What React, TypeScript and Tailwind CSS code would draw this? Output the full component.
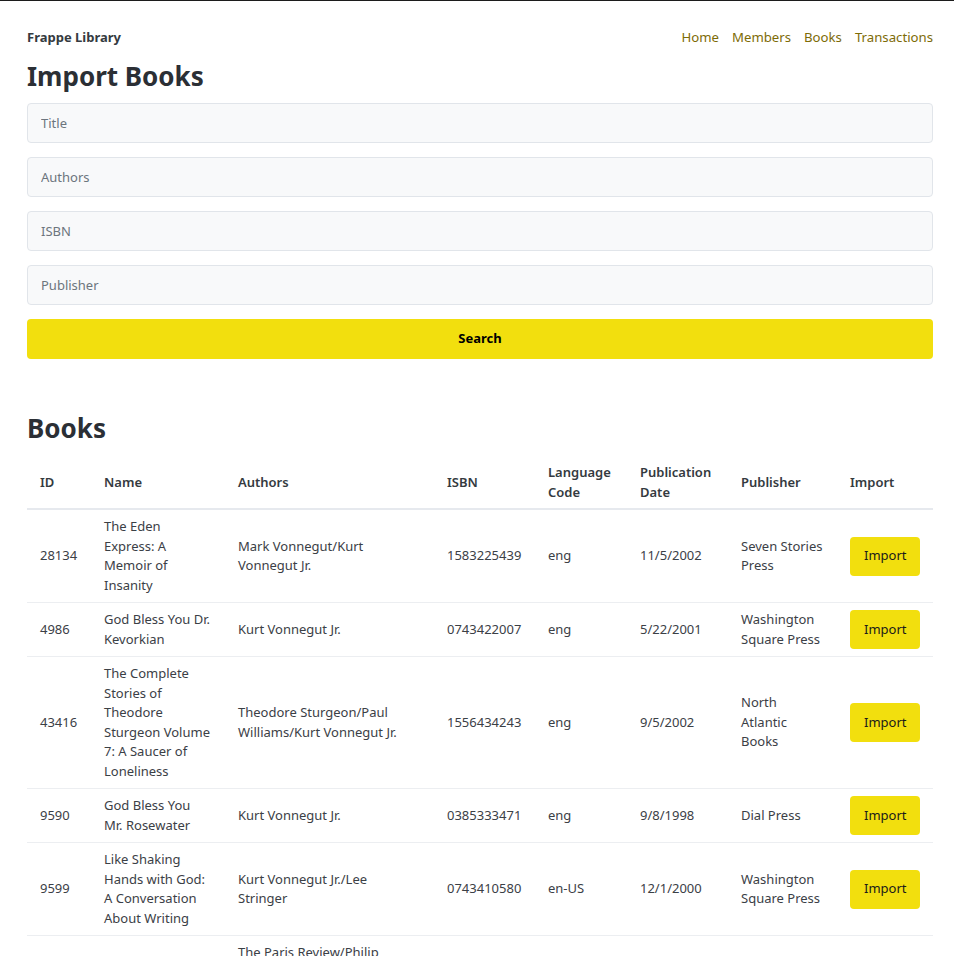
import React from "react";

const books = [
  {
    id: "28134",
    name: "The Eden Express: A Memoir of Insanity",
    authors: "Mark Vonnegut/Kurt Vonnegut Jr.",
    isbn: "1583225439",
    lang: "eng",
    date: "11/5/2002",
    publisher: "Seven Stories Press",
  },
  {
    id: "4986",
    name: "God Bless You Dr. Kevorkian",
    authors: "Kurt Vonnegut Jr.",
    isbn: "0743422007",
    lang: "eng",
    date: "5/22/2001",
    publisher: "Washington Square Press",
  },
  {
    id: "43416",
    name: "The Complete Stories of Theodore Sturgeon Volume 7: A Saucer of Loneliness",
    authors: "Theodore Sturgeon/Paul Williams/Kurt Vonnegut Jr.",
    isbn: "1556434243",
    lang: "eng",
    date: "9/5/2002",
    publisher: "North Atlantic Books",
  },
  {
    id: "9590",
    name: "God Bless You Mr. Rosewater",
    authors: "Kurt Vonnegut Jr.",
    isbn: "0385333471",
    lang: "eng",
    date: "9/8/1998",
    publisher: "Dial Press",
  },
  {
    id: "9599",
    name: "Like Shaking Hands with God: A Conversation About Writing",
    authors: "Kurt Vonnegut Jr./Lee Stringer",
    isbn: "0743410580",
    lang: "en-US",
    date: "12/1/2000",
    publisher: "Washington Square Press",
  },
  {
    id: "9598",
    name: "The Paris Review Interviews, Vol. 1",
    authors:
      "The Paris Review/Philip Gourevitch/Kurt Vonnegut Jr./Dorothy Parker/Ernest Hemingway/T.S. Eliot/Truman Capote",
    isbn: "0312361750",
    lang: "eng",
    date: "11/14/2006",
    publisher: "Picador USA",
  },
];

const fields = ["Title", "Authors", "ISBN", "Publisher"];

export default function App() {
  return (
    <div
      className="min-h-screen bg-white border-t border-[#1c1c1c] pl-[27px] pr-[21px] text-[#3b4046]"
      style={{ fontFamily: '"Noto Sans", "Open Sans", sans-serif' }}
    >
      {/* Header */}
      <header className="flex items-center justify-between pt-[27px]">
        <span className="text-[13px] font-bold text-[#343a40] leading-[19px]">
          Frappe Library
        </span>
        <nav className="flex gap-[13px] text-[13.2px] leading-[19px] text-[#7d6b06]">
          <a href="#">Home</a>
          <a href="#">Members</a>
          <a href="#">Books</a>
          <a href="#">Transactions</a>
        </nav>
      </header>

      {/* Import form */}
      <h1 className="mt-[12px] text-[26px] font-bold leading-[34px] text-[#2b2f35]">
        Import Books
      </h1>
      <form className="mt-[10px] flex flex-col gap-[14px]">
        {fields.map((f) => (
          <input
            key={f}
            placeholder={f}
            className="h-[40px] w-full rounded-[4px] border border-[#e1e5ea] bg-[#f8f9fa] px-[13px] text-[13px] text-[#3b4046] placeholder:text-[#6c757d] outline-none"
          />
        ))}
        <button
          type="button"
          className="h-[40px] w-full rounded-[4px] bg-[#f2df0e] text-[13px] font-bold text-black"
        >
          Search
        </button>
      </form>

      {/* Books table */}
      <h2 className="mt-[52px] text-[26px] font-bold leading-[34px] text-[#2b2f35]">
        Books
      </h2>
      <table className="mt-[9px] w-full table-fixed border-collapse text-[13px] leading-[19.5px]">
        <colgroup>
          <col className="w-[64px]" />
          <col className="w-[134px]" />
          <col className="w-[209px]" />
          <col className="w-[101px]" />
          <col className="w-[92px]" />
          <col className="w-[101px]" />
          <col className="w-[109px]" />
          <col className="w-[96px]" />
        </colgroup>
        <thead>
          <tr className="border-b-2 border-[#e6e9ee] text-left text-[#343a40]">
            {[
              "ID",
              "Name",
              "Authors",
              "ISBN",
              "Language Code",
              "Publication Date",
              "Publisher",
              "Import",
            ].map((h) => (
              <th key={h} className="px-[13px] pt-[9px] pb-[6px] align-middle font-semibold">
                {h}
              </th>
            ))}
          </tr>
        </thead>
        <tbody>
          {books.map((b) => (
            <tr key={b.id} className="border-b border-[#eceef1]">
              <td className="px-[13px] py-[7px] align-middle">{b.id}</td>
              <td className="px-[13px] py-[7px] align-middle">{b.name}</td>
              <td className="pl-[13px] pr-[22px] py-[7px] align-middle">{b.authors}</td>
              <td className="px-[13px] py-[7px] align-middle">{b.isbn}</td>
              <td className="px-[13px] py-[7px] align-middle">{b.lang}</td>
              <td className="px-[13px] py-[7px] align-middle">{b.date}</td>
              <td className="px-[13px] py-[7px] align-middle">{b.publisher}</td>
              <td className="px-[13px] py-[7px] align-middle">
                <button className="h-[39px] rounded-[4px] bg-[#f2df0e] px-[14px] text-[13px] text-[#1a1a1a]">
                  Import
                </button>
              </td>
            </tr>
          ))}
        </tbody>
      </table>
    </div>
  );
}
